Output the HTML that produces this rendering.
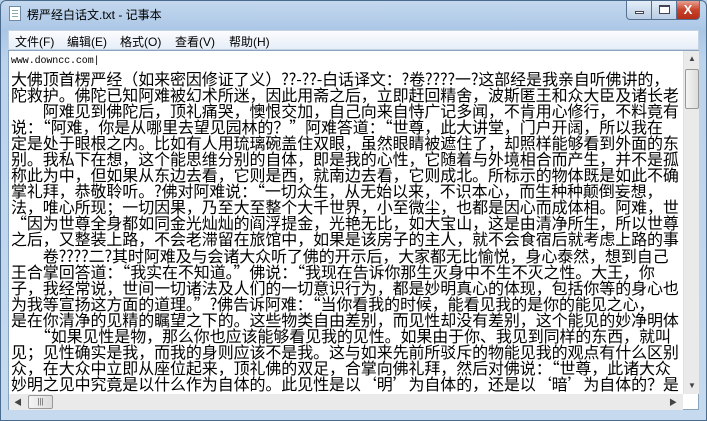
<!DOCTYPE html>
<html><head><meta charset="utf-8"><style>
*{margin:0;padding:0;box-sizing:border-box}
body{width:707px;height:421px;overflow:hidden;background:#b9d1ea;font-family:"Liberation Sans","Noto Sans CJK SC",sans-serif;position:relative}
.frame{position:absolute;left:0;top:0;width:707px;height:421px;background:linear-gradient(180deg,#c4d8ee 0,#aac6e6 30px,#bcd3ec 60px,#c6daef 100%);border:1px solid #4a6a8e;border-radius:6px 6px 0 0}
.title{position:absolute;left:27px;top:6px;font-size:12px;color:#000}
.ico{position:absolute;left:9px;top:6px;width:12px;height:15px;background:#fff;border:1px solid #6d8aa8}
.ico:after{content:"";position:absolute;left:2px;top:3px;width:6px;height:7px;background:repeating-linear-gradient(#8aa 0 1px,transparent 1px 3px)}
.btn{position:absolute;top:1px;height:19px;border:1px solid #56708f;border-top:none;background:linear-gradient(#e4eef8,#b9cde4)}
.min{left:626px;width:26px;border-radius:0 0 0 4px}
.max{left:651px;width:26px}
.cls{left:676px;width:24px;background:linear-gradient(#e8a090,#c8412b 50%,#b52d17);border-radius:0 0 4px 0;color:#fff;font-size:13px;font-weight:bold;text-align:center;line-height:18px}
.menu{position:absolute;left:8px;top:30px;width:691px;height:20px;background:linear-gradient(#fbfcfe,#e6eef8);border:1px solid #c5d3e3;font-size:12px}
.menu span{position:absolute;top:2px}
.edit{position:absolute;left:8px;top:50px;width:691px;height:360px;background:#fff;border:1px solid #8aa3bf}
.txt{position:absolute;left:2px;top:3px;width:672px;height:340px;overflow:hidden;white-space:pre;font-family:"Noto Sans CJK SC","WenQuanYi Zen Hei",sans-serif;font-size:16px;line-height:16px;color:#000;letter-spacing:-0.1px}
.txt .w{display:block;height:16px;font-family:"Liberation Mono",monospace;font-size:10px;line-height:16px}
.txt .b{display:block;line-height:16.05px}
.vs{position:absolute;left:674px;top:0;width:16px;height:343px;background:#eaeaea;border-left:1px solid #e0e0e0}
.hs{position:absolute;left:0;top:343px;width:674px;height:16px;background:#eaeaea}
.thumb{position:absolute;background:linear-gradient(90deg,#f4f4f4,#dcdcdc);border:1px solid #999;border-radius:2px}
.ar{position:absolute;font-size:8px;color:#444}
</style></head><body>
<div class="frame"></div>
<div class="ico"></div>
<div class="title">楞严经白话文.txt - 记事本</div>
<div class="btn min"><div style="position:absolute;left:8px;top:10px;width:9px;height:3px;border:1px solid #445;background:#fff"></div></div>
<div class="btn max"><div style="position:absolute;left:7px;top:4px;width:11px;height:9px;border:1px solid #445;border-top-width:2px;background:#fff"></div></div>
<div class="btn cls">X</div>
<div class="menu"><span style="left:6px">文件(F)</span><span style="left:58px">编辑(E)</span><span style="left:111px">格式(O)</span><span style="left:166px">查看(V)</span><span style="left:220px">帮助(H)</span></div>
<div class="edit">
<div class="txt"><span class="w">www.downcc.com|</span><span class="b">大佛顶首楞严经（如来密因修证了义）??-??-白话译文：?卷????一?这部经是我亲自听佛讲的，
陀救护。佛陀已知阿难被幻术所迷，因此用斋之后，立即赶回精舍，波斯匿王和众大臣及诸长老
　　阿难见到佛陀后，顶礼痛哭，懊恨交加，自己向来自恃广记多闻，不肯用心修行，不料竟有
说：“阿难，你是从哪里去望见园林的？”阿难答道：“世尊，此大讲堂，门户开阔，所以我在
定是处于眼根之内。比如有人用琉璃碗盖住双眼，虽然眼睛被遮住了，却照样能够看到外面的东
别。我私下在想，这个能思维分别的自体，即是我的心性，它随着与外境相合而产生，并不是孤
称此为中，但如果从东边去看，它则是西，就南边去看，它则成北。所标示的物体既是如此不确
掌礼拜，恭敬聆听。?佛对阿难说：“一切众生，从无始以来，不识本心，而生种种颠倒妄想，
法，唯心所现；一切因果，乃至大至整个大千世界，小至微尘，也都是因心而成体相。阿难，世
“因为世尊全身都如同金光灿灿的阎浮提金，光艳无比，如大宝山，这是由清净所生，所以世尊
之后，又整装上路，不会老滞留在旅馆中，如果是该房子的主人，就不会食宿后就考虑上路的事
　　卷????二?其时阿难及与会诸大众听了佛的开示后，大家都无比愉悦，身心泰然，想到自己
王合掌回答道：“我实在不知道。”佛说：“我现在告诉你那生灭身中不生不灭之性。大王，你
子，我经常说，世间一切诸法及人们的一切意识行为，都是妙明真心的体现，包括你等的身心也
为我等宣扬这方面的道理。”?佛告诉阿难：“当你看我的时候，能看见我的是你的能见之心，
是在你清净的见精的瞩望之下的。这些物类自由差别，而见性却没有差别，这个能见的妙净明体
　　“如果见性是物，那么你也应该能够看见我的见性。如果由于你、我见到同样的东西，就叫
见；见性确实是我，而我的身则应该不是我。这与如来先前所驳斥的物能见我的观点有什么区别
众，在大众中立即从座位起来，顶礼佛的双足，合掌向佛礼拜，然后对佛说：“世尊，此诸大众
妙明之见中究竟是以什么作为自体的。此见性是以‘明’为自体的，还是以‘暗’为自体的？是</span></div>
<div class="vs"><div class="ar" style="left:4px;top:3px">▲</div><div class="thumb" style="left:1px;top:18px;width:14px;height:40px"></div><div class="ar" style="left:4px;top:330px">▼</div></div>
<div class="hs"><div class="ar" style="left:5px;top:3px">◀</div><div class="thumb" style="left:19px;top:1px;width:25px;height:14px;font-size:8px;text-align:center;line-height:12px;color:#555">|||</div><div class="ar" style="left:660px;top:3px">▶</div></div>
</div>
</body></html>
